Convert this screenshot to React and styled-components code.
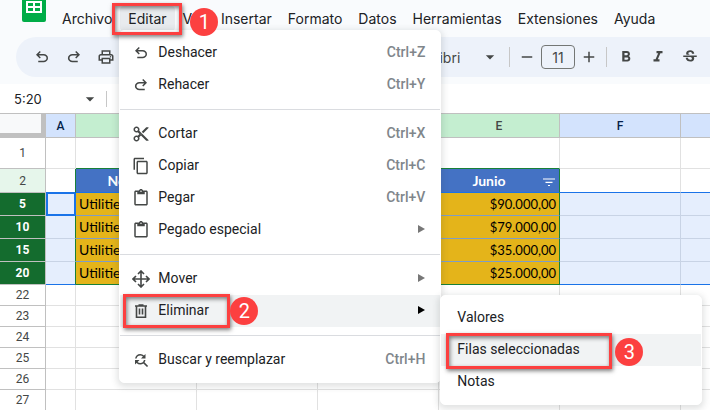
import React from "react"
import styled, { createGlobalStyle } from "styled-components"
import {
  MdArrowDropDown,
  MdContentCopy,
  MdContentCut,
  MdContentPaste,
  MdFindReplace,
  MdFormatBold,
  MdFormatItalic,
  MdOutlinePrint,
  MdStrikethroughS,
  MdAdd,
  MdRemove,
} from "react-icons/md"

const columns = ["A", "B", "C", "D", "E", "F", "G", "H", "I", "J"]
const tableColumns = ["B", "C", "D", "E"]

const rows = [
  { id: 1, height: 31 },
  { id: 2, height: 24, kind: "head", cells: { B: "Notas", E: "Junio" } },
  { id: 5, height: 23, kind: "data", cells: { B: "Utilities", E: "$90.000,00" } },
  { id: 10, height: 23, kind: "data", cells: { B: "Utilities", E: "$79.000,00" } },
  { id: 15, height: 23, kind: "data", cells: { B: "Utilities", E: "$35.000,00" } },
  { id: 20, height: 23, kind: "data", last: true, cells: { B: "Utilities", E: "$25.000,00" } },
  { id: 22, height: 21 },
  { id: 23, height: 21 },
  { id: 24, height: 21 },
  { id: 25, height: 21 },
  { id: 26, height: 21 },
  { id: 27, height: 21 },
]

const UndoIcon = () => (
  <svg viewBox="0 -960 960 960" fill="currentColor" aria-hidden="true">
    <path d="M280-200v-80h284q63 0 109.5-40T720-420q0-60-46.5-100T564-560H312l104 104-56 56-200-200 200-200 56 56-104 104h252q97 0 169.5 63T800-420q0 94-72.5 157T564-200H280Z" />
  </svg>
)

const RedoIcon = () => (
  <svg viewBox="0 -960 960 960" fill="currentColor" aria-hidden="true">
    <path d="M396-200q-97 0-169.500-63T154-420q0-94 72.500-157T396-640h252L544-744l56-56 200 200-200 200-56-56 104-104H396q-63 0-109.500 40T240-420q0 60 46.500 100T396-280h284v80H396Z" />
  </svg>
)

const MoveIcon = () => (
  <svg viewBox="0 0 18 18" fill="none" stroke="currentColor" strokeWidth="1.6" aria-hidden="true">
    <path d="M9 1v16M1 9h16M6 4l3-3 3 3M6 14l3 3 3-3M4 6L1 9l3 3M14 6l3 3-3 3" />
  </svg>
)

const TrashIcon = () => (
  <svg viewBox="0 0 18 18" fill="none" stroke="currentColor" strokeWidth="1.6" aria-hidden="true">
    <path d="M3 4h12M6.500 3h5M4.500 4v11.200h9V4M7.500 6.500v6M10.500 6.500v6" />
  </svg>
)

const FilterIcon = () => (
  <svg viewBox="0 0 16 16" stroke="currentColor" strokeWidth="1.2" aria-hidden="true">
    <path d="M2 5h12M4.500 8.300h7M7 11.500h2" />
  </svg>
)

const SheetsLogo = () => (
  <svg width="24" height="22" viewBox="0 0 24 22" aria-hidden="true">
    <path d="M0 0h24v20a2 2 0 0 1-2 2H2a2 2 0 0 1-2-2z" fill="#00ac47" />
    <path d="M4 1h16v12H4z" fill="#fff" />
    <path d="M6 3h5v3H6zM13 3h5v3h-5zM6 8h5v3H6zM13 8h5v3h-5z" fill="#00ac47" />
  </svg>
)

const SubMenu = () => (
  <SubMenuPanel>
    <MenuItem>Valores</MenuItem>
    <MenuItem $active>
      <span>Filas seleccionadas</span>
      <Frame $top={-1} $left={5} $width={166} $height={36} />
      <Badge $top={4} $left={174}>3</Badge>
    </MenuItem>
    <MenuItem>Notas</MenuItem>
  </SubMenuPanel>
)

const EditMenu = () => (
  <EditMenuPanel>
    <MenuItem>
      <MenuIcon><UndoIcon /></MenuIcon>
      <Label>Deshacer</Label>
      <Shortcut>Ctrl+Z</Shortcut>
    </MenuItem>
    <MenuItem>
      <MenuIcon><RedoIcon /></MenuIcon>
      <Label>Rehacer</Label>
      <Shortcut>Ctrl+Y</Shortcut>
    </MenuItem>
    <Separator />
    <MenuItem>
      <MenuIcon><MdContentCut /></MenuIcon>
      <Label>Cortar</Label>
      <Shortcut>Ctrl+X</Shortcut>
    </MenuItem>
    <MenuItem>
      <MenuIcon><MdContentCopy /></MenuIcon>
      <Label>Copiar</Label>
      <Shortcut>Ctrl+C</Shortcut>
    </MenuItem>
    <MenuItem>
      <MenuIcon><MdContentPaste /></MenuIcon>
      <Label>Pegar</Label>
      <Shortcut>Ctrl+V</Shortcut>
    </MenuItem>
    <MenuItem>
      <MenuIcon><MdContentPaste /></MenuIcon>
      <Label>Pegado especial</Label>
      <Arrow />
    </MenuItem>
    <Separator />
    <MenuItem>
      <MenuIcon><MoveIcon /></MenuIcon>
      <Label>Mover</Label>
      <Arrow />
    </MenuItem>
    <SubMenuAnchor>
      <MenuItem $active>
        <MenuIcon><TrashIcon /></MenuIcon>
        <Label>Eliminar</Label>
        <Arrow $active />
        <Frame $top={-1} $left={3} $width={107} $height={34} />
        <Badge $top={2} $left={110}>2</Badge>
      </MenuItem>
      <SubMenu />
    </SubMenuAnchor>
    <Separator />
    <MenuItem>
      <MenuIcon><MdFindReplace /></MenuIcon>
      <Label>Buscar y reemplazar</Label>
      <Shortcut>Ctrl+H</Shortcut>
    </MenuItem>
  </EditMenuPanel>
)

const Grid = () => (
  <Table>
    <colgroup>
      <col width="46" />
      {columns.map(name => (
        <col key={name} width={name === "A" ? 30 : 121} />
      ))}
    </colgroup>
    <thead>
      <tr>
        <Corner />
        {columns.map(name => (
          <ColumnHead key={name} scope="col" $filtered={tableColumns.includes(name)}>
            {name}
          </ColumnHead>
        ))}
      </tr>
    </thead>
    <tbody>
      {rows.map(row => (
        <tr key={row.id}>
          <RowHead scope="row" $kind={row.kind} $height={row.height}>
            {row.id}
          </RowHead>
          {columns.map(name => (
            <Cell
              key={name}
              $kind={row.kind}
              $inTable={tableColumns.includes(name)}
              $beforeTable={name === "A"}
              $lastColumn={name === "E"}
              $aboveTable={row.id === 1}
              $last={row.last}
              $current={name === "A" && row.id === 5}
            >
              {row.cells && row.cells[name] && (
                <CellText $head={row.kind === "head"} $number={row.kind === "data" && name === "E"}>
                  {row.cells[name]}
                  {row.kind === "head" && (
                    <FilterButton type="button" aria-label="Filtro">
                      <FilterIcon />
                    </FilterButton>
                  )}
                </CellText>
              )}
            </Cell>
          ))}
        </tr>
      ))}
    </tbody>
  </Table>
)

const App = () => (
  <>
    <GlobalStyle />
    <Header>
      <TopRow>
        <SheetsLogo />
        <MenuBar>
          <MenuBarButton type="button">Archivo</MenuBarButton>
          <MenuAnchor>
            <MenuBarButton type="button" $open>Editar</MenuBarButton>
            <EditMenu />
            <Frame $top={-3} $left={-8} $width={70} $height={32} />
            <Badge $top={2} $left={70}>1</Badge>
          </MenuAnchor>
          <MenuBarButton type="button">Ver</MenuBarButton>
          <MenuBarButton type="button">Insertar</MenuBarButton>
          <MenuBarButton type="button">Formato</MenuBarButton>
          <MenuBarButton type="button">Datos</MenuBarButton>
          <MenuBarButton type="button">Herramientas</MenuBarButton>
          <MenuBarButton type="button">Extensiones</MenuBarButton>
          <MenuBarButton type="button">Ayuda</MenuBarButton>
        </MenuBar>
      </TopRow>
      <Toolbar>
        <ToolGroup>
          <Tool type="button" aria-label="Deshacer"><UndoIcon /></Tool>
          <Tool type="button" aria-label="Rehacer"><RedoIcon /></Tool>
          <Tool type="button" aria-label="Imprimir"><MdOutlinePrint /></Tool>
        </ToolGroup>
        <FontButton type="button">
          Calibri
          <MdArrowDropDown />
        </FontButton>
        <Divider />
        <SizeGroup>
          <StepButton type="button" aria-label="Reducir"><MdRemove /></StepButton>
          <SizeInput aria-label="Tamaño de fuente" defaultValue="11" />
          <StepButton type="button" aria-label="Aumentar"><MdAdd /></StepButton>
        </SizeGroup>
        <Divider />
        <StyleGroup>
          <Tool type="button" aria-label="Negrita"><MdFormatBold /></Tool>
          <Tool type="button" aria-label="Cursiva"><MdFormatItalic /></Tool>
          <Tool type="button" aria-label="Tachado"><MdStrikethroughS /></Tool>
        </StyleGroup>
      </Toolbar>
    </Header>
    <FormulaBar>
      <NameBox aria-label="Rango" defaultValue="5:20" />
      <MdArrowDropDown />
      <Divider $short />
    </FormulaBar>
    <Grid />
  </>
)

export default App

const GlobalStyle = createGlobalStyle`
  * {
    box-sizing: border-box;
  }
  body {
    margin: 0;
    overflow: hidden;
    background: #fff;
    color: #202124;
    font-family: Roboto, "Liberation Sans", sans-serif;
    font-size: 14px;
  }
  button,
  input {
    margin: 0;
    padding: 0;
    border: 0;
    background: none;
    color: inherit;
    font: inherit;
  }
`

const Header = styled.header`
  padding-bottom: 7px;
  background: #f9fbfd;
`
const TopRow = styled.div`
  display: flex;
  align-items: flex-start;
  padding-left: 22px;
`
const MenuBar = styled.nav`
  display: flex;
  margin: 6px 0 6px 8px;
  font-family: Inter, Roboto, sans-serif;
`
const MenuAnchor = styled.div`
  position: relative;
`
const MenuBarButton = styled.button`
  height: 25px;
  padding: 0 8px;
  border-radius: 4px;
  background: ${({ $open }) => ($open ? "#e8ebee" : "none")};
  line-height: 25px;
  white-space: nowrap;
`
const Toolbar = styled.div`
  display: flex;
  align-items: center;
  height: 40px;
  margin-left: 16px;
  padding-left: 10px;
  border-radius: 20px 0 0 20px;
  background: #edf2fa;
  color: #444746;
`
const ToolGroup = styled.div`
  display: flex;
`
const StyleGroup = styled(ToolGroup)`
  margin-left: 3px;
`
const Tool = styled.button`
  display: flex;
  justify-content: center;
  width: 32px;

  svg {
    width: 18px;
    height: 18px;
  }
`
const FontButton = styled.button`
  display: flex;
  align-items: center;
  justify-content: space-between;
  width: 82px;
  margin: 0 9px 0 296px;
  font-family: Inter, Roboto, sans-serif;

  svg {
    width: 20px;
    height: 20px;
  }
`
const Divider = styled.span`
  flex: none;
  width: 1px;
  height: ${({ $short }) => ($short ? 16 : 20)}px;
  background: #c7c7c7;
`
const SizeGroup = styled.div`
  display: flex;
  align-items: center;
  padding: 0 3px;
`
const StepButton = styled.button`
  display: flex;
  justify-content: center;
  width: 28px;

  svg {
    width: 18px;
    height: 18px;
  }
`
const SizeInput = styled.input`
  width: 34px;
  height: 24px;
  border: 1px solid #747775;
  border-radius: 4px;
  font-family: Inter, Roboto, sans-serif;
  text-align: center;
`
const FormulaBar = styled.div`
  display: flex;
  align-items: center;
  height: 29px;
  padding-left: 14px;
  color: #444746;

  svg {
    width: 20px;
    height: 20px;
    margin-right: 6px;
  }
`
const NameBox = styled.input`
  width: 66px;
  font-family: Inter, Roboto, sans-serif;
  font-size: 13px;
  color: #202124;
`

const Panel = styled.div`
  position: absolute;
  padding: 6px 0;
  border: 1px solid #fff;
  border-radius: 5px;
  background: #fff;
  box-shadow: 0 2px 6px 2px rgba(60, 64, 67, 0.15);
  font-family: Roboto, "Liberation Sans", sans-serif;
`
const EditMenuPanel = styled(Panel)`
  top: 24px;
  left: -1px;
  z-index: 10;
  width: 322px;
`
const SubMenuAnchor = styled.div`
  position: relative;
`
const SubMenuPanel = styled(Panel)`
  top: 0;
  left: 320px;
  width: 262px;
`
const MenuItem = styled.button`
  position: relative;
  display: flex;
  align-items: center;
  width: 100%;
  height: 32px;
  padding: 0 15px 2px 12px;
  background: ${({ $active }) => ($active ? "#f1f3f4" : "none")};
  font-size: 14px;
  text-align: left;

  ${SubMenuPanel} & {
    padding-left: 16px;
  }
`
const MenuIcon = styled.span`
  display: flex;
  width: 26px;
  padding-top: 2px;
  color: #444746;

  svg {
    width: 18px;
    height: 18px;
  }
`
const Label = styled.span`
  flex: 1;
`
const Shortcut = styled.span`
  color: #80868b;
  font-weight: 500;
`
const Arrow = styled.span`
  width: 0;
  height: 0;
  border: solid transparent;
  border-width: 4px 0 4px 7px;
  border-left-color: ${({ $active }) => ($active ? "#000" : "#777")};
`
const Separator = styled.hr`
  height: 1px;
  margin: 8px 0;
  border: 0;
  background: #dadce0;
`

const Frame = styled.span`
  position: absolute;
  z-index: 20;
  top: ${({ $top }) => $top}px;
  left: ${({ $left }) => $left}px;
  width: ${({ $width }) => $width}px;
  height: ${({ $height }) => $height}px;
  border: 3px solid #fc4040;
  box-shadow: 1px 2px 4px rgba(0, 0, 0, 0.5), inset 1px 2px 4px rgba(0, 0, 0, 0.5);
  pointer-events: none;
`
const Badge = styled.span`
  position: absolute;
  z-index: 20;
  top: ${({ $top }) => $top}px;
  left: ${({ $left }) => $left}px;
  width: 28px;
  height: 28px;
  border-radius: 50%;
  background: #fc4040;
  color: #fff;
  font-family: Roboto, sans-serif;
  font-size: 20px;
  line-height: 28px;
  text-align: center;
`

const Table = styled.table`
  width: 100%;
  border-collapse: separate;
  border-spacing: 0;
  border-top: 1px solid #c0c0c0;
  table-layout: fixed;

  th,
  td {
    padding: 0;
  }
`
const Corner = styled.td`
  height: 24px;
  border: solid #c0c0c0;
  border-width: 0 5px 5px 0;
  background: #f8f9fa;
`
const ColumnHead = styled.th`
  border: solid #c0c0c0;
  border-width: 0 1px 1px 0;
  background: ${({ $filtered }) => ($filtered ? "#c4eed0" : "#d3e3fd")};
  color: ${({ $filtered }) => ($filtered ? "#444746" : "#041e49")};
  font-size: 12px;
  font-weight: 500;
`
const rowHeadColors = {
  head: "#e6f6eb",
  data: "#146c2e",
}
const RowHead = styled.th`
  height: ${({ $height }) => $height}px;
  border: solid #c0c0c0;
  border-width: 0 1px 1px 0;
  background: ${({ $kind }) => rowHeadColors[$kind] || "#fff"};
  color: ${({ $kind }) => ($kind === "data" ? "#fff" : "#444746")};
  font-size: 12px;
  font-weight: ${({ $kind }) => ($kind === "data" ? 700 : 400)};
`

const cellBackground = ({ $kind, $inTable }) => {
  if ($kind === "head" && $inTable) return "#4472c4"
  if ($kind === "data") return $inTable ? "#e4b41a" : "#e5eefd"
  return "#fff"
}
const bottomLine = ({ $kind, $inTable, $last, $aboveTable, $current }) => {
  if ($aboveTable && $inTable) return "#188038"
  if ($last && $inTable) return "#188038"
  if ($kind === "head" || $last || $current) return "#1a73e8"
  if ($kind === "data") return $inTable ? "#7f9dc6" : "#c8d3e5"
  return "#e1e1e1"
}
const rightLine = ({ $kind, $inTable, $lastColumn, $beforeTable, $current }) => {
  if ($current) return "#1a73e8"
  if ($kind && ($lastColumn || $beforeTable)) return "#188038"
  if ($kind === "head") return $inTable ? "#4472c4" : "#e1e1e1"
  if ($kind === "data") return "#c8d3e5"
  return "#e1e1e1"
}
const Cell = styled.td`
  border-style: solid;
  border-width: 0 1px 1px ${({ $current }) => ($current ? 1 : 0)}px;
  border-color: transparent ${rightLine} ${bottomLine} #1a73e8;
  background: ${cellBackground};
  box-shadow: ${({ $current }) => ($current ? "inset 0 0 0 1px #1a73e8" : "none")};
  color: ${({ $kind }) => ($kind === "head" ? "#fff" : "#000")};
  font-family: Lato, sans-serif;
  font-size: 14px;
  font-weight: ${({ $kind }) => ($kind === "head" ? 700 : 400)};
`
const cellAlign = ({ $head, $number }) => {
  if ($head) return "center"
  return $number ? "right" : "left"
}
const CellText = styled.div`
  position: relative;
  padding: 0 ${({ $head }) => ($head ? 23 : 3)}px 0 3px;
  font-size: ${({ $number }) => ($number ? 13 : 14)}px;
  line-height: 20px;
  text-align: ${cellAlign};
`
const FilterButton = styled.button`
  position: absolute;
  top: 3px;
  right: 2px;
  display: flex;

  svg {
    width: 16px;
    height: 16px;
  }
`
